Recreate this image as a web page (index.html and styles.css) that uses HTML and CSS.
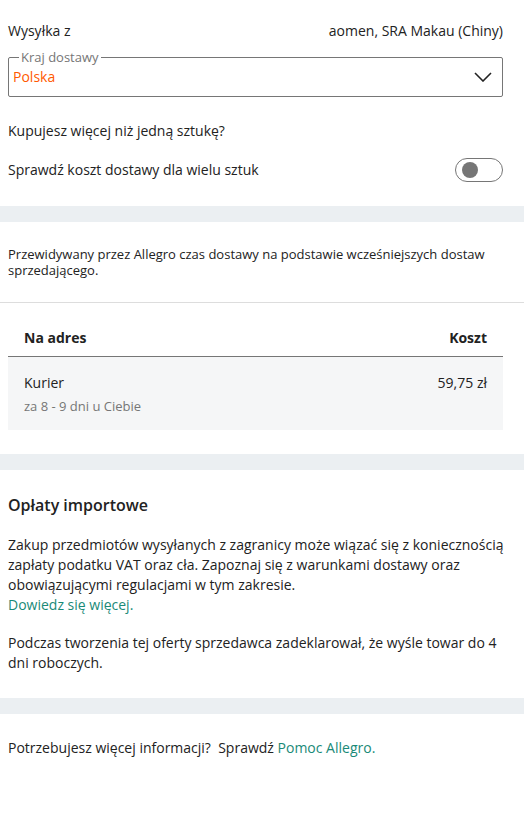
FILE: index.html
```html
<!DOCTYPE html>
<html lang="pl">
<head>
  <meta charset="UTF-8" />
  <meta name="viewport" content="width=device-width, initial-scale=1.0"/>
  <title>Dostawa i płatność</title>
  <link rel="stylesheet" href="styles.css">
</head>
<body>

<!-- Shipping origin -->
<div class="section section-top">
  <div class="row">
    <span>Wysyłka z</span>
    <span>aomen, SRA Makau (Chiny)</span>
  </div>

  <fieldset class="select">
    <legend>Kraj dostawy</legend>
    <div class="select-value">
      <span>Polska</span>
      <svg class="chevron" width="18" height="10" viewBox="0 0 18 10">
        <path d="M1 1 L9 9 L17 1" fill="none" stroke="#222" stroke-width="1.6"/>
      </svg>
    </div>
  </fieldset>

  <p class="question">Kupujesz więcej niż jedną sztukę?</p>

  <div class="row toggle-row">
    <span>Sprawdź koszt dostawy dla wielu sztuk</span>
    <span class="toggle"><span class="knob"></span></span>
  </div>
</div>

<div class="band"></div>

<!-- Delivery times -->
<div class="section note">
  Przewidywany przez Allegro czas dostawy na podstawie wcześniejszych dostaw sprzedającego.
</div>

<div class="section table-section">
  <div class="table-head">
    <span>Na adres</span>
    <span>Koszt</span>
  </div>
  <div class="table-row">
    <div>
      <div>Kurier</div>
      <div class="sub">za 8 - 9 dni u Ciebie</div>
    </div>
    <div>59,75 zł</div>
  </div>
</div>

<div class="band"></div>

<!-- Import fees -->
<div class="section import">
  <h3>Opłaty importowe</h3>
  <p>Zakup przedmiotów wysyłanych z zagranicy może wiązać się z koniecznością zapłaty podatku VAT oraz cła. Zapoznaj się z warunkami dostawy oraz obowiązującymi regulacjami w tym zakresie.<br><a href="#">Dowiedz się więcej.</a></p>
  <p>Podczas tworzenia tej oferty sprzedawca zadeklarował, że wyśle towar do 4 dni roboczych.</p>
</div>

<div class="band"></div>

<div class="section help">
  Potrzebujesz więcej informacji?&nbsp; Sprawdź <a href="#">Pomoc Allegro.</a>
</div>

</body>
</html>
```

FILE: styles.css
```css
body {
  margin: 0;
  font-family: "Open Sans", sans-serif;
  font-size: 14px;
  line-height: 20px;
  color: #222;
  background: #fff;
}

a {
  color: #1a8a78;
  text-decoration: none;
}

.section {
  padding: 0 21px 0 8px;
}

.section-top {
  padding-top: 21px;
  padding-bottom: 24px;
}

.row {
  display: flex;
  justify-content: space-between;
  align-items: center;
}

.select {
  margin: 7px 0 0;
  padding: 1px 8px 9px 4px;
  border: 1px solid #767676;
  border-radius: 2px;
}

.select legend {
  margin-left: 6px;
  padding: 0 2px;
  font-size: 13px;
  line-height: 18px;
  color: #767676;
}

.select-value {
  display: flex;
  justify-content: space-between;
  align-items: center;
  color: #ff5a00;
}

.chevron {
  margin-right: 2px;
}

.question {
  margin: 24px 0 0;
}

.toggle-row {
  margin-top: 17px;
}

.toggle {
  display: flex;
  align-items: center;
  box-sizing: border-box;
  width: 48px;
  height: 24px;
  padding: 0 6px;
  border: 1px solid #767676;
  border-radius: 12px;
}

.knob {
  width: 16px;
  height: 16px;
  border-radius: 50%;
  background: #767676;
}

.band {
  height: 16px;
  background: #ebeff2;
}

.note {
  padding-top: 24px;
  padding-bottom: 24px;
  font-size: 13px;
  line-height: 16px;
  border-bottom: 1px solid #ddd;
}

.table-section {
  padding-top: 25px;
  padding-bottom: 24px;
}

.table-head {
  display: flex;
  justify-content: space-between;
  padding: 0 16px 8px;
  font-weight: 700;
  border-bottom: 1px solid #767676;
}

.table-row {
  display: flex;
  justify-content: space-between;
  padding: 16px 16px 15px;
  background: #f5f6f7;
}

.sub {
  margin-top: 4px;
  font-size: 13px;
  line-height: 18px;
  color: #767676;
}

.import {
  padding-top: 23px;
  padding-right: 8px;
  padding-bottom: 25px;
}

.import h3 {
  margin: 0;
  font-size: 16px;
  line-height: 24px;
  font-weight: 600;
}

.import p {
  margin: 18px 0 0;
}

.help {
  padding-top: 24px;
  padding-bottom: 24px;
}
```
